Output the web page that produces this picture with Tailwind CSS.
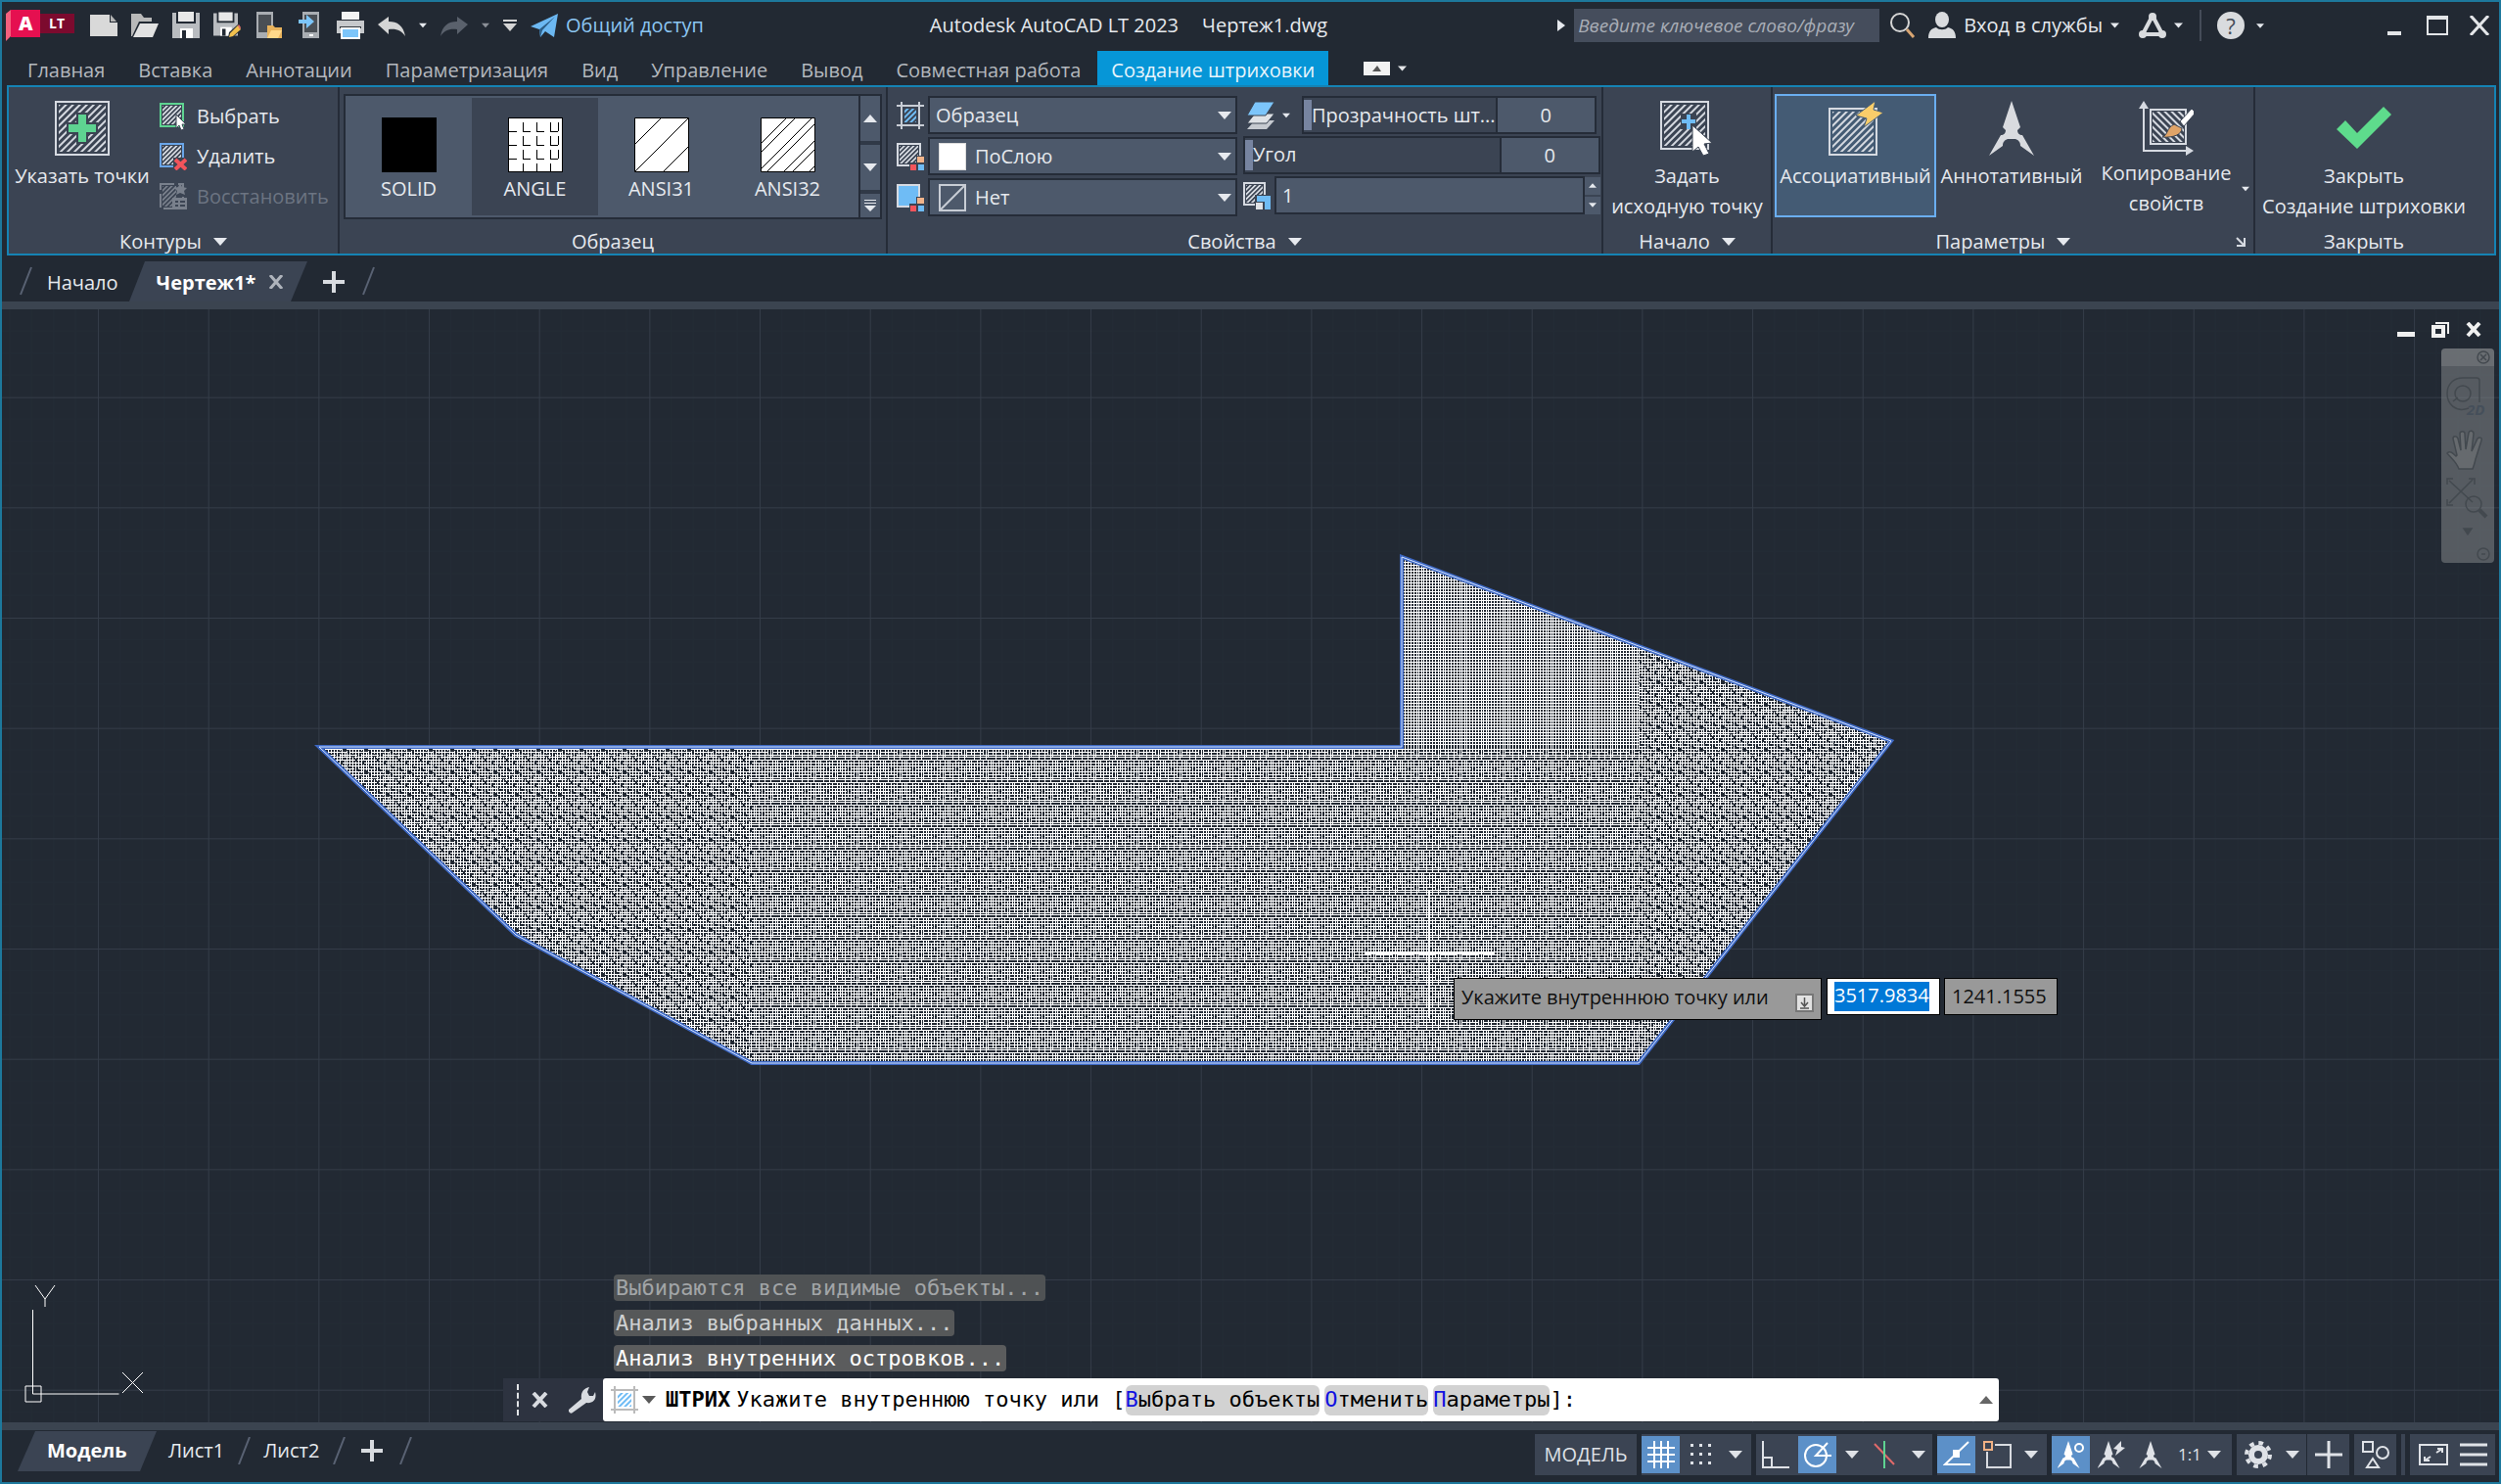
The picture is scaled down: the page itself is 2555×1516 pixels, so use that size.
<!DOCTYPE html>
<html lang="ru">
<head>
    <meta charset="utf-8">
    <title>Autodesk AutoCAD LT 2023 - Чертеж1.dwg</title>
    <script src="https://cdn.jsdelivr.net/npm/@tailwindcss/browser@4"></script>
</head>
<body class="bg-[#222933]">

<!-- Shared icon definitions -->
<svg class="absolute w-0 h-0" aria-hidden="true">
    <defs>
        <pattern id="diag" width="5" height="5" patternUnits="userSpaceOnUse" patternTransform="rotate(45)">
            <rect x="0" width="2" height="5" fill="#d6dae1" />
        </pattern>
        <pattern id="diag-small" width="3.4" height="3.4" patternUnits="userSpaceOnUse" patternTransform="rotate(45)">
            <rect x="0" width="1.7" height="3.4" fill="#d6dae1" />
        </pattern>
        <pattern id="diag-back" width="5" height="5" patternUnits="userSpaceOnUse" patternTransform="rotate(-45)">
            <rect x="0" width="2" height="5" fill="#d6dae1" />
        </pattern>
        <pattern id="diag-blue" width="4" height="4" patternUnits="userSpaceOnUse" patternTransform="rotate(45)">
            <rect x="0" width="2" height="4" fill="#6fbcf5" />
        </pattern>
        <symbol id="down" viewBox="0 0 14 8"><path d="M0 0h14L7 8z" fill="currentColor" /></symbol>
        <symbol id="up" viewBox="0 0 14 8"><path d="M0 8h14L7 0z" fill="currentColor" /></symbol>
        <symbol id="floppy" viewBox="0 0 28 28">
            <path d="M0 1h4v11h20V1h4v26H0z" fill="#b9bcc0" />
            <path d="M6 0h16v10H6z" fill="#e8e8e8" />
            <path d="M8 17h13v10H8z" fill="#fff" />
            <path d="M10 19h4v8h-4z" fill="#222933" />
        </symbol>
        <symbol id="anno" viewBox="0 0 48 56">
            <path d="M24 0l9 27-3 3c0 3 2 5 5 5l12 21-14-10c0-4-2-6-5-7h-8c-3 1-5 3-5 7L1 56l12-21c3 0 5-2 5-5l-3-3z" fill="currentColor" />
        </symbol>
    </defs>
</svg>

<div class="min-h-screen flex flex-col border-2 border-[#1d789c] font-['Open_Sans','Noto_Sans',sans-serif] text-[20px] leading-6 text-[#e6e9ee]">

    <!-- Title bar -->
    <header class="h-[48px] shrink-0 relative flex items-center justify-between pl-1 pr-[10px]">
        <div class="flex items-center gap-[14px]">
            <button class="flex items-start mr-[2px]" aria-label="Меню приложения">
                <svg class="w-[70px] h-8" viewBox="0 0 70 32">
                    <path d="M0 4L5 0v27L0 32z" fill="#f5607d" />
                    <path d="M5 0h30v28H5z" fill="#e51050" />
                    <path d="M35 4h35v20H35z" fill="#7c0a2e" />
                    <text x="13" y="21" font-size="20" font-weight="800" fill="#fff">A</text>
                    <text x="44" y="19" font-size="14" font-weight="700" fill="#fff">LT</text>
                </svg>
            </button>
            <button aria-label="Новый"><svg class="w-7 h-7" viewBox="0 0 28 28"><path d="M0 3h20v8h8v14H0z" fill="#d9d9d9" /><path d="M21 3l6 7h-6z" fill="#b5b5b5" /></svg></button>
            <button aria-label="Открыть"><svg class="w-7 h-7" viewBox="0 0 28 28"><path d="M0 2h10l3 4h8v4H8L1 25H0z" fill="#b9b9b9" /><path d="M9 12h19l-6 14H2z" fill="#e2e2e2" /></svg></button>
            <button aria-label="Сохранить"><svg class="w-7 h-7"><use href="#floppy" /></svg></button>
            <button aria-label="Сохранить как"><svg class="w-7 h-7" viewBox="0 0 28 28"><use href="#floppy" width="25" height="26" /><path d="M15 27l1-6 9-8 4 5-9 8z" fill="#222933" /><path d="M16 26l1-4 8-8 3 4-8 7z" fill="#f2c14e" /><path d="M25 14l1-1 2 3-1 2z" fill="#e86f6f" /></svg></button>
            <button aria-label="Открыть из веб"><svg class="w-7 h-7" viewBox="0 0 28 28"><path d="M2 0h17v27H2z" fill="#a9adb2" /><path d="M4 3h13v18H4z" fill="#4a4f55" /><path d="M13 14h6l2 2h7v11H13z" fill="#e9b35c" /><path d="M17 19h11l-4 8H13z" fill="#ffd88a" /></svg></button>
            <button aria-label="Сохранить в веб"><svg class="w-7 h-7" viewBox="0 0 28 28"><path d="M7 0h17v27H7z" fill="#a9adb2" /><path d="M9 3h13v18H9z" fill="#4a4f55" /><path d="M3 8h8V3l8 7-8 7v-5H3z" fill="#7cc5fa" /><path d="M14 23h4v2h-4z" fill="#fff" /></svg></button>
            <button aria-label="Печать"><svg class="w-7 h-7" viewBox="0 0 28 28"><path d="M5 0h18v8H5z" fill="#f4f4f4" /><path d="M0 9h28v13H0z" fill="#c7c9cc" /><path d="M3 15h22v2H3z" fill="#33393f" /><path d="M5 17h18v10H5z" fill="#7cc5fa" stroke="#fff" stroke-width="2" /></svg></button>
            <button aria-label="Отменить"><svg class="w-7 h-7" viewBox="0 0 28 28"><path d="M0 13l11-8v5c9 0 15 4 17 15-4-6-9-8-17-7v5z" fill="#d5d5d5" /></svg></button>
            <svg class="w-2 h-[6px]"><use href="#down" /></svg>
            <button class="text-[#5a616c]" aria-label="Повторить"><svg class="w-7 h-7" viewBox="0 0 28 28"><path d="M28 13L17 5v5C8 10 2 14 0 25c4-6 9-8 17-7v5z" fill="currentColor" /></svg></button>
            <svg class="w-2 h-[6px] text-[#8b9098]"><use href="#down" /></svg>
            <button aria-label="Настройка панели"><svg class="w-[14px] h-3" viewBox="0 0 14 12"><path d="M0 0h14v2H0zM0 4h14l-7 8z" fill="#d5d5d5" /></svg></button>
            <button class="flex items-center gap-2 text-[#8cc6f2]">
                <svg class="w-7 h-6" viewBox="0 0 28 24"><path d="M0 13L28 0l-4 24-9-6-5 6-1-8z" fill="#6cb8f2" /><path d="M9 16L25 3 12 17l-2 7z" fill="#2c5d86" /></svg>
                Общий доступ
            </button>
        </div>

        <h1 class="absolute left-[37%] flex gap-6 pl-1 whitespace-nowrap"><span>Autodesk AutoCAD LT 2023</span><span>Чертеж1.dwg</span></h1>

        <div class="flex items-center">
            <svg class="w-2 h-3 mr-[9px]" viewBox="0 0 8 12"><path d="M0 0l8 6-8 6z" fill="#e6e9ee" /></svg>
            <input type="search" aria-label="Поиск" placeholder="Введите ключевое слово/фразу" class="w-[312px] h-[34px] px-1 bg-[#454d5c] italic text-[19px] placeholder:text-[#a9aeb7]">
            <button class="ml-[10px]" aria-label="Найти"><svg class="w-7 h-7" viewBox="0 0 28 28" fill="none"><circle cx="11" cy="11" r="9" stroke="#d5d5d5" stroke-width="2" /><path d="M18 18l7 8" stroke="#d8a572" stroke-width="3" /></svg></button>
            <button class="flex items-center gap-2 ml-3">
                <svg class="w-7 h-7" viewBox="0 0 28 28" fill="#d9dbde"><ellipse cx="14" cy="8" rx="7" ry="8" /><path d="M0 27c0-7 3-10 8-11 3 3 9 3 12 0 5 1 8 4 8 11z" /></svg>
                Вход в службы
                <svg class="w-[9px] h-[6px]"><use href="#down" /></svg>
            </button>
            <button class="flex items-center gap-2 ml-[20px]" aria-label="Autodesk App Store">
                <svg class="w-7 h-7" viewBox="0 0 28 28" fill="none" stroke="#d9dbde" stroke-width="4"><path d="M14 4L4 23M14 4l10 19M4 23h20" /><circle cx="14" cy="5" r="2" /><circle cx="4" cy="23" r="2" /><circle cx="24" cy="23" r="2" /></svg>
                <svg class="w-[9px] h-[6px]"><use href="#down" /></svg>
            </button>
            <span class="w-[2px] h-8 ml-[17px] bg-[#454c58]"></span>
            <button class="flex items-center gap-3 ml-4" aria-label="Справка">
                <span class="w-7 h-7 rounded-full bg-[#d9dbde] text-[#454c58] text-[22px] leading-7">?</span>
                <svg class="w-2 h-[5px]"><use href="#down" /></svg>
            </button>
            <button class="ml-[126px]" aria-label="Свернуть"><svg class="w-[14px] h-5" viewBox="0 0 14 20"><path d="M0 16h14v4H0z" fill="#e3e5e8" /></svg></button>
            <button class="ml-[26px]" aria-label="Развернуть"><svg class="w-[22px] h-5" viewBox="0 0 22 20"><path d="M1 1h20v18H1z" fill="none" stroke="#e3e5e8" stroke-width="2" /><path d="M0 0h22v4H0z" fill="#e3e5e8" /></svg></button>
            <button class="ml-[22px]" aria-label="Закрыть"><svg class="w-5 h-5" viewBox="0 0 20 20"><path d="M1 0l18 20M19 0L1 20" stroke="#e3e5e8" stroke-width="3" /></svg></button>
        </div>
    </header>

    <!-- Ribbon tabs -->
    <nav class="h-[37px] shrink-0 flex items-stretch pl-[9px] pt-[2px] text-[#b4b8be]">
        <button class="px-[17px] pt-1">Главная</button>
        <button class="px-[17px] pt-1">Вставка</button>
        <button class="px-[17px] pt-1">Аннотации</button>
        <button class="px-[17px] pt-1">Параметризация</button>
        <button class="px-[17px] pt-1">Вид</button>
        <button class="px-[17px] pt-1">Управление</button>
        <button class="px-[17px] pt-1">Вывод</button>
        <button class="px-[17px] pt-1">Совместная работа</button>
        <button class="px-[14px] pt-1 bg-[#0696d7] text-[#e8f5fc]">Создание штриховки</button>
        <button class="flex items-center gap-2 ml-9" aria-label="Свернуть ленту">
            <svg class="w-[27px] h-[14px]" viewBox="0 0 27 14"><path d="M0 0h27v14H0z" fill="#f2f2f2" /><path d="M9 10h9l-4-6z" fill="#555" /></svg>
            <svg class="w-[9px] h-[6px] text-[#e3e5e8]"><use href="#down" /></svg>
        </button>
    </nav>

    <!-- Ribbon -->
    <section class="h-[174px] shrink-0 ml-[5px] mr-[3px] flex border-2 border-[#1583b4] bg-[#3b4453] whitespace-nowrap">

        <!-- Boundaries -->
        <div class="w-[338px] flex flex-col border-r-2 border-[#252c38]">
            <div class="h-[146px] flex pt-[14px] pl-[8px] gap-3">
                <button class="flex flex-col items-center w-[134px]">
                    <svg class="w-14 h-14" viewBox="0 0 56 56"><path d="M1 1h54v54H1z" fill="none" stroke="#d6dae1" stroke-width="2" /><path d="M4 4h48v48H4z" fill="url(#diag)" /><path d="M22 12h12v10h10v12H34v10H22V34H12V22h10z" fill="#3b4453" /><path d="M24 14h8v10h10v8H32v10h-8V32H14v-8h10z" fill="#5ed391" /></svg>
                    <span class="mt-[9px]">Указать точки</span>
                </button>
                <div class="flex flex-col gap-[13px] pt-[2px]">
                    <button class="flex items-center gap-[10px] h-7">
                        <svg class="w-7 h-7" viewBox="0 0 28 28"><path d="M1 1h23v23H1z" fill="none" stroke="#5ed391" stroke-width="2" /><path d="M3 3h19v19H3z" fill="url(#diag-small)" /><path d="M17 12v14l3-3 2 5 3-1-2-5h4z" fill="#fff" stroke="#3b4453" /></svg>
                        Выбрать
                    </button>
                    <button class="flex items-center gap-[10px] h-7">
                        <svg class="w-7 h-7" viewBox="0 0 28 28"><path d="M1 1h23v23H1z" fill="none" stroke="#6aa5e8" stroke-width="2" /><path d="M3 3h19v19H3z" fill="url(#diag-small)" /><path d="M14 15h14v13H14z" fill="#3b4453" /><path d="M16 17l11 10M27 17L16 27" stroke="#f2545b" stroke-width="4" /></svg>
                        Удалить
                    </button>
                    <button class="flex items-center gap-[10px] h-7 text-[#6c7482]" disabled>
                        <svg class="w-7 h-7" viewBox="0 0 28 28" opacity="0.4"><path d="M1 1h23v25H1z" fill="none" stroke="#d6dae1" stroke-width="2" stroke-dasharray="14 4" /><path d="M3 3h14v21H3z" fill="url(#diag-small)" /><path d="M21 0l2 4 5 1-3 3 1 4-5-2-4 2 1-4-3-3 4-1z" fill="#d6dae1" /><path d="M13 15h15v12H13z" fill="#d6dae1" /><path d="M16 19h3M21 19h5M16 23h3M21 23h5" stroke="#3b4453" stroke-width="2" /></svg>
                        Восстановить
                    </button>
                </div>
            </div>
            <h2 class="flex justify-center items-center gap-3">Контуры <svg class="w-[14px] h-2"><use href="#down" /></svg></h2>
        </div>

        <!-- Pattern gallery -->
        <div class="w-[560px] flex flex-col border-r-2 border-[#252c38]">
            <div class="h-[128px] mt-[7px] mb-[11px] mx-1 flex border-2 border-[#252c38] bg-[#4d596b]">
                <button class="w-[129px] flex flex-col items-center pt-[22px] gap-[5px]">
                    <svg class="w-14 h-14" viewBox="0 0 56 56"><path d="M0 0h56v56H0z" /></svg>SOLID
                </button>
                <button class="w-[129px] my-[2px] flex flex-col items-center pt-[20px] gap-[5px] bg-[#3b4453]">
                    <svg class="w-14 h-14" viewBox="0 0 56 56" stroke="#000" shape-rendering="crispEdges"><path d="M.5.5h55v55H.5z" fill="#fff" /><path d="M1 14.500h8M15 14.500h8M29 14.500h8M43 14.500h8M1 28.500h8M15 28.500h8M29 28.500h8M43 28.500h8M1 42.500h8M15 42.500h8M29 42.500h8M43 42.500h8M15.500 5v9M29.500 5v9M43.500 5v9M51.500 5v9M15.500 19v9M29.500 19v9M43.500 19v9M51.500 19v9M15.500 33v9M29.500 33v9M43.500 33v9M51.500 33v9M15.500 47v9M29.500 47v9M43.500 47v9" /></svg>ANGLE
                </button>
                <button class="w-[129px] flex flex-col items-center pt-[22px] gap-[5px]">
                    <svg class="w-14 h-14" viewBox="0 0 56 56" stroke="#000"><path d="M.5.5h55v55H.5z" fill="#fff" /><path d="M1 27L27 1M1 55L55 1M30 55l25-25" /></svg>ANSI31
                </button>
                <button class="w-[129px] flex flex-col items-center pt-[22px] gap-[5px]">
                    <svg class="w-14 h-14" viewBox="0 0 56 56" stroke="#000"><path d="M.5.5h55v55H.5z" fill="#fff" /><path d="M1 26L26 1M1 35L35 1M1 52L52 1M7 55L55 7M24 55l31-31M33 55l22-22M50 55l5-5" /></svg>ANSI32
                </button>
                <div class="flex-1 flex flex-col ml-[8px] border-l-2 border-[#252c38]">
                    <button class="h-[50px] flex justify-center items-center border-b-4 border-[#303947]" aria-label="Вверх"><svg class="w-[14px] h-2"><use href="#up" /></svg></button>
                    <button class="flex-1 flex justify-center items-center border-b-4 border-[#303947]" aria-label="Вниз"><svg class="w-[14px] h-2"><use href="#down" /></svg></button>
                    <button class="h-6 flex justify-center items-center" aria-label="Все образцы"><svg class="w-[12px] h-3" viewBox="0 0 12 12" fill="currentColor"><path d="M0 0h12v1H0zM0 3h12v1H0zM0 6h12l-6 6z" /></svg></button>
                </div>
            </div>
            <h2 class="text-center">Образец</h2>
        </div>

        <!-- Properties -->
        <div class="w-[731px] flex flex-col border-r-2 border-[#252c38]">
            <div class="h-[146px] pt-[9px] pl-[9px] flex gap-[6px]">
                <div class="flex flex-col gap-[3px]">
                    <label class="flex items-center gap-1 relative">
                        <svg class="w-7 h-7" viewBox="0 0 28 28"><path d="M5 0v28M23 0v28M0 4h28M0 24h28" stroke="#c8cdd5" stroke-width="2" /><path d="M8 7h12v14H8z" fill="url(#diag-blue)" /></svg>
                        <select aria-label="Тип штриховки" class="appearance-none w-[316px] h-[39px] px-[6px] border-2 border-[#252c38] bg-[#4d596b]"><option>Образец</option></select>
                        <svg class="absolute right-[6px] w-[14px] h-2"><use href="#down" /></svg>
                    </label>
                    <label class="flex items-center gap-1 relative">
                        <svg class="w-7 h-7" viewBox="0 0 28 28"><path d="M1 1h23v22H1z" fill="none" stroke="#d6dae1" stroke-width="2" /><path d="M3 3h19v18H3z" fill="url(#diag-small)" /><path d="M13 20h7v-7h8v15H13z" fill="#3b4453" /><path d="M21 14h7v6h-7z" fill="#f2b48a" /><path d="M14 22h6v6h-6z" fill="#f2545b" /><path d="M22 22h6v6h-6z" fill="#6fbcf5" /></svg>
                        <select aria-label="Цвет штриховки" class="appearance-none w-[316px] h-[39px] pl-[46px] border-2 border-[#252c38] bg-[#4d596b]"><option>ПоСлою</option></select>
                        <span class="absolute left-[43px] w-7 h-7 bg-white border border-[#ddd]"></span>
                        <svg class="absolute right-[6px] w-[14px] h-2"><use href="#down" /></svg>
                    </label>
                    <label class="flex items-center gap-1 relative">
                        <svg class="w-7 h-7" viewBox="0 0 28 28"><path d="M1 1h22v22H1z" fill="#6fbcf5" stroke="#d6dae1" stroke-width="2" /><path d="M13 20h7v-7h8v15H13z" fill="#3b4453" /><path d="M21 14h7v6h-7z" fill="#f2b48a" /><path d="M14 22h6v6h-6z" fill="#f2545b" /><path d="M22 22h6v6h-6z" fill="#6fbcf5" /></svg>
                        <select aria-label="Цвет фона" class="appearance-none w-[316px] h-[39px] pl-[46px] border-2 border-[#252c38] bg-[#4d596b]"><option>Нет</option></select>
                        <svg class="absolute left-[43px] w-7 h-7" viewBox="0 0 28 28"><path d="M1 1h26v26H1zM1 27L27 1" fill="none" stroke="#c8cdd5" stroke-width="2" /></svg>
                        <svg class="absolute right-[6px] w-[14px] h-2"><use href="#down" /></svg>
                    </label>
                </div>
                <div class="w-[365px] flex flex-col gap-[2px] mr-1">
                    <div class="flex items-center">
                        <button class="flex items-center gap-2 px-1" aria-label="Слой штриховки"><svg class="w-7 h-7" viewBox="0 0 28 28"><path d="M8 19h20l-8 9H0z" fill="#c6cad0" /><path d="M8 12h20l-8 10H0z" fill="#dfe2e6" stroke="#3b4453" /><path d="M8 0h20L19 14H0z" fill="#7cc5fa" stroke="#3b4453" /></svg><svg class="w-2 h-[6px]"><use href="#down" /></svg></button>
                        <div class="relative flex flex-1 h-[39px] ml-2 mr-1 border-2 border-[#252c38]">
                            <input type="range" value="0" aria-label="Прозрачность штриховки" class="absolute left-0 w-[196px] h-full appearance-none [&::-webkit-slider-thumb]:appearance-none [&::-webkit-slider-thumb]:w-2 [&::-webkit-slider-thumb]:h-[31px] [&::-webkit-slider-thumb]:bg-[#7784a0]">
                            <label for="transparency" class="relative flex-1 pl-2 pt-[6px]">Прозрачность шт...</label>
                            <input id="transparency" value="0" class="relative w-[101px] text-center border-l-2 border-[#252c38] bg-[#4d596b]">
                        </div>
                    </div>
                    <div class="relative flex h-[39px] border-2 border-[#252c38]">
                        <input type="range" value="0" aria-label="Угол штриховки" class="absolute left-0 w-[256px] h-full appearance-none [&::-webkit-slider-thumb]:appearance-none [&::-webkit-slider-thumb]:w-2 [&::-webkit-slider-thumb]:h-[31px] [&::-webkit-slider-thumb]:bg-[#7784a0]">
                        <label for="angle" class="relative flex-1 pl-2 pt-[5px]">Угол</label>
                        <input id="angle" value="0" class="relative w-[101px] text-center border-l-2 border-[#252c38] bg-[#4d596b]">
                    </div>
                    <label class="flex items-center gap-1">
                        <svg class="w-7 h-7" viewBox="0 0 28 28"><path d="M1 1h21v22H1z" fill="none" stroke="#d6dae1" stroke-width="2" /><path d="M3 3h17v18H3z" fill="url(#diag-small)" /><path d="M12 13h16v15H12z" fill="#3b4453" /><path d="M14 14h14v14h-6v-8h-8z" fill="#6fbcf5" /><path d="M13 21h7v7h-7z" fill="#dfe2e6" /></svg>
                        <input value="1" aria-label="Масштаб образца" class="flex-1 h-[39px] px-[6px] border-2 border-[#252c38] bg-[#4d596b]">
                        <span class="flex flex-col gap-[2px] -ml-1">
                            <button class="w-4 h-[18px] flex justify-center items-center bg-[#4d596b]" aria-label="Больше"><svg class="w-2 h-[7px]"><use href="#up" /></svg></button>
                            <button class="w-4 h-[18px] flex justify-center items-center bg-[#4d596b]" aria-label="Меньше"><svg class="w-2 h-[7px]"><use href="#down" /></svg></button>
                        </span>
                    </label>
                </div>
            </div>
            <h2 class="flex justify-center items-center gap-3">Свойства <svg class="w-[14px] h-2"><use href="#down" /></svg></h2>
        </div>

        <!-- Origin -->
        <div class="w-[173px] flex flex-col border-r-2 border-[#252c38]">
            <button class="h-[146px] flex flex-col items-center pt-[14px]">
                <svg class="w-14 h-14" viewBox="0 0 56 56"><path d="M1 1h48v48H1z" fill="none" stroke="#d6dae1" stroke-width="2" /><path d="M4 4h42v42H4z" fill="url(#diag)" /><path d="M21 13h16v16H21z" fill="#3b4453" /><path d="M27 14h4v5h5v4h-5v6h-4v-6h-5v-4h5z" fill="#6fbcf5" /><path d="M33 25v27l6-5 5 9 6-2-5-10 8-1z" fill="#fff" stroke="#3b4453" /></svg>
                <span class="mt-[5px] leading-[31px]">Задать<br>исходную точку</span>
            </button>
            <h2 class="flex justify-center items-center gap-3">Начало <svg class="w-[14px] h-2"><use href="#down" /></svg></h2>
        </div>

        <!-- Options -->
        <div class="w-[493px] flex flex-col border-r-2 border-[#252c38]">
            <div class="h-[146px] flex pt-[7px] pl-[2px]">
                <button class="w-[165px] h-[126px] flex flex-col items-center pt-[5px] border-2 border-[#6aaef0] bg-[#445b74]">
                    <svg class="w-14 h-14" viewBox="0 0 56 56"><path d="M1 8h48v47H1z" fill="none" stroke="#d6dae1" stroke-width="2" /><path d="M4 11h42v41H4z" fill="url(#diag)" /><path d="M48 0L28 15l11 3-3 9 20-15-10-3z" fill="#f9cd6a" stroke="#445b74" /></svg>
                    <span class="mt-[9px]">Ассоциативный</span>
                </button>
                <button class="w-[154px] flex flex-col items-center pt-[7px]">
                    <svg class="w-12 h-14 text-[#d9dbdf]"><use href="#anno" /></svg>
                    <span class="mt-[9px]">Аннотативный</span>
                </button>
                <button class="w-[154px] flex flex-col items-center pt-[7px] ml-1">
                    <svg class="w-14 h-14" viewBox="0 0 56 56"><path d="M5 4v47h47" fill="none" stroke="#d6dae1" stroke-width="2" /><path d="M0 8h10L5 0zM48 46v10l8-5z" fill="#d6dae1" /><path d="M12 9h36v35H12z" fill="none" stroke="#d6dae1" stroke-width="2" /><path d="M14 11h32v31H14z" fill="url(#diag-back)" /><path d="M42 21L54 8l4 4-12 14z" fill="#fff" stroke="#3b4453" /><path d="M24 37c6-2 4-9 12-13l8 4c0 6-8 10-20 9z" fill="#e0a468" stroke="#3b4453" /></svg>
                    <span class="mt-[2px] leading-[31px]">Копирование<br>свойств</span>
                </button>
                <svg class="w-2 h-[6px] mt-[94px]"><use href="#down" /></svg>
            </div>
            <h2 class="relative flex justify-center items-center gap-3 pr-5">Параметры <svg class="w-[14px] h-2"><use href="#down" /></svg>
                <svg class="absolute right-2 w-[10px] h-[10px]" viewBox="0 0 10 10"><path d="M1 1l7 7M9 1v8H1" fill="none" stroke="#d6dae1" stroke-width="2" /></svg>
            </h2>
        </div>

        <!-- Close -->
        <div class="flex-1 flex flex-col pr-[22px]">
            <button class="h-[146px] flex flex-col items-center pt-[14px]">
                <svg class="w-14 h-14" viewBox="0 0 56 56"><path d="M0 29l9-9 12 13L48 6l8 8-35 35z" fill="#5edb8c" /></svg>
                <span class="mt-[5px] leading-[31px]">Закрыть<br>Создание штриховки</span>
            </button>
            <h2 class="text-center">Закрыть</h2>
        </div>
    </section>

    <!-- Document tabs -->
    <nav class="h-[47px] shrink-0 flex items-end pl-4">
        <svg class="w-4 h-[30px] mb-[6px]" viewBox="0 0 16 30"><path d="M14 1L3 29" stroke="#596273" stroke-width="2" /></svg>
        <button class="h-9 px-[14px] pb-[2px]">Начало</button>
        <div class="relative flex items-center h-[41px] w-[182px] -ml-[3px]">
            <svg class="absolute w-full h-full" viewBox="0 0 182 41" preserveAspectRatio="none"><path d="M16 0h166l-17 41H0z" fill="#3b4453" /></svg>
            <button class="relative ml-[28px] pt-[2px] font-bold text-white">Чертеж1*</button>
            <button class="relative ml-[14px]" aria-label="Закрыть вкладку"><svg class="w-[14px] h-[14px]" viewBox="0 0 14 14"><path d="M1 0l12 14M13 0L1 14" stroke="#aeb3bb" stroke-width="3" /></svg></button>
        </div>
        <button class="ml-4 mb-[9px]" aria-label="Новая вкладка"><svg class="w-[22px] h-[22px]" viewBox="0 0 22 22"><path d="M11 0v22M0 11h22" stroke="#d8dbe0" stroke-width="4" /></svg></button>
        <svg class="w-4 h-[30px] mb-[6px] ml-[16px]" viewBox="0 0 16 30"><path d="M14 1L3 29" stroke="#596273" stroke-width="2" /></svg>
    </nav>

    <!-- Drawing area -->
    <main class="relative flex-1 border-y-8 border-[#3b4450]">
        <svg class="absolute inset-0 w-full h-full" aria-label="Чертеж">
            <defs>
                <pattern id="grid" x="98" y="-23" width="112.67" height="112.67" patternUnits="userSpaceOnUse">
                    <path d="M22.500 0v113M45 0v113M67.500 0v113M90 0v113M0 22.500h113M0 45h113M0 67.500h113M0 90h113" stroke="#232b35" />
                    <path d="M.5 0v113M0 .5h113" stroke="#343c48" />
                </pattern>
                <pattern id="mesh" width="22" height="21" patternUnits="userSpaceOnUse">
                    <path d="M.5 0v21M3.500 0v21M6.500 0v21M9.500 0v21M12.500 0v21M15.500 0v21M17.500 0v21M20.500 0v21M0 .5h22M0 3.500h22M0 6.500h22M0 9.500h22M0 12.500h22M0 15.500h22M0 18.500h22" stroke="#fff" />
                </pattern>
                <pattern id="mesh-body" width="22" height="23" patternUnits="userSpaceOnUse">
                    <path d="M.5 0v18M3.500 4v19M6.500 0v15M9.500 2v21M12.500 0v19M15.500 6v17M17.500 0v20M20.500 0v12" stroke="#fff" />
                    <path d="M0 .5h22M0 3.500h22M0 6.500h22M0 9.500h5M9 9.500h13M0 12.500h22M0 15.500h13M17 15.500h5M0 18.500h22M0 20.500h22" stroke="#fff" />
                </pattern>
                <pattern id="mesh-side" width="22" height="23" patternUnits="userSpaceOnUse">
                    <path d="M.5 0v12M.5 14v9M3.500 0v6M3.500 9v14M6.500 0v17M6.500 20v3M9.500 2v20M12.500 0v9M12.500 12v11M15.500 0v14M15.500 17v6M17.500 5v18M20.500 0v11M20.500 15v5" stroke="#fff" />
                    <path d="M0 .5h9M11 .5h11M0 3.500h15M18 3.500h4M2 6.500h20M0 9.500h8M12 9.500h10M0 12.500h18M3 15.500h19M0 18.500h11M15 18.500h7M0 20.500h5M8 20.500h14" stroke="#fff" />
                </pattern>
                <clipPath id="hull"><path d="M324 447H1430V253L1930 441 1672 770H766L525 639z" /></clipPath>
            </defs>
            <rect width="100%" height="100%" fill="url(#grid)" shape-rendering="crispEdges" />
            <g clip-path="url(#hull)" shape-rendering="crispEdges">
                <path d="M766 447h906v324H766z" fill="url(#mesh-body)" />
                <path d="M1430 250h242v197h-242z" fill="url(#mesh)" />
                <path d="M320 447h446v324H320zM1672 250h260v522h-260z" fill="url(#mesh-side)" />
            </g>
            <path d="M324 447H1430V253L1930 441 1672 770H766L525 639z" fill="none" stroke="#3d68c4" stroke-width="4" />
            <path d="M324 447H1430V253L1930 441 1672 770H766L525 639z" fill="none" stroke="#d5e4ff" stroke-width="1" />
            <!-- Crosshair -->
            <path d="M1393 658h131M1458 594v130" stroke="#fff" stroke-width="2" shape-rendering="crispEdges" />
            <!-- UCS axes -->
            <path d="M31.500 1022v86h88M24 1100h16v16H24zM34 997l10 14 10-14M44 1011v8M123 1086l21 21M144 1086l-21 21" fill="none" stroke="#fff" />
        </svg>

        <!-- Dynamic input -->
        <div class="absolute left-[1483px] top-[683px] flex items-start gap-1 text-[#0f0f0f]">
            <div class="h-[43px] w-[376px] flex items-center justify-between pl-[7px] pr-[7px] pb-1 border border-black bg-[#999]">
                Укажите внутреннюю точку или
                <svg class="w-[19px] h-[19px] mt-3" viewBox="0 0 19 19"><path d="M1 1h17v17H1z" fill="#e2e2e2" stroke="#777" stroke-width="2" /><path d="M9.500 4v8M6 9l3.500 4L13 9M5 15h9" fill="none" stroke="#555" stroke-width="1.500" /></svg>
            </div>
            <div class="h-[38px] w-[116px] ml-[1px] flex items-center px-[7px] border border-black bg-white"><span class="bg-[#0078d7] text-white h-[30px] leading-7">3517.9834</span></div>
            <div class="h-[38px] w-[116px] flex items-center px-[7px] border border-black bg-[#999]">1241.1555</div>
        </div>

        <!-- Viewport window controls -->
        <div class="absolute top-[13px] right-[18px] flex items-center gap-[17px]">
            <button aria-label="Свернуть чертеж"><svg class="w-[18px] h-4" viewBox="0 0 18 16"><path d="M0 10h18v5H0z" fill="#f0f0f0" /></svg></button>
            <button aria-label="Восстановить чертеж"><svg class="w-[18px] h-4" viewBox="0 0 18 16" fill="none" stroke="#f0f0f0"><path d="M4 1h13v11" stroke-width="2" /><path d="M2 5h10v9H2z" stroke-width="4" /></svg></button>
            <button aria-label="Закрыть чертеж"><svg class="w-4 h-4" viewBox="0 0 16 16"><path d="M2 1l12 13M14 1L2 14" stroke="#f0f0f0" stroke-width="4" /></svg></button>
        </div>

        <!-- Navigation bar -->
        <div class="absolute top-[40px] right-[5px] w-[54px] h-[219px] rounded bg-[#8a8d8f]/50 overflow-hidden">
            <svg class="w-full h-full" viewBox="0 0 54 219" fill="none" stroke="#43494f" stroke-width="1.500">
                <path d="M0 0h54v18H0z" fill="#8b8f92" fill-opacity=".35" stroke="none" />
                <circle cx="43" cy="9" r="6" /><path d="M40 6l6 6M46 6l-6 6" />
                <circle cx="22" cy="46" r="8" /><path d="M28 61C14 66 6 56 6 46c0-10 7-16 16-16h14c2 0 3 1 3 3v22M12 54l5-4" />
                <text x="26" y="68" font-size="15" font-weight="700" font-style="italic" fill="#454f5a" stroke="none">2D</text>
                <path d="M18 123c-3-8-8-11-12-16 3-3 6 0 9 3l1-1-4-17c0-3 4-3 5 0l3 12-1-17c0-3 5-3 5 0l1 16 3-17c1-3 5-2 5 1l-2 18 6-13c2-2 5-1 4 2l-6 19c-1 5-2 7-3 10z" fill="#666a6e" />
                <path d="M8 135l24 22M8 158l24-24M6 139v-6h6M28 133h6v6M6 154v6h6" />
                <circle cx="33" cy="159" r="8" /><path d="M39 165l7 7" stroke-width="4" />
                <path d="M23 184h8l-4 6z" fill="#43494f" />
                <circle cx="43" cy="210" r="6" /><path d="M41 210h4" />
            </svg>
        </div>

        <!-- Command history and prompt -->
        <div class="absolute left-[512px] bottom-[1px] right-[511px] font-['DejaVu_Sans_Mono',monospace] text-[22px]">
            <div class="flex flex-col items-start gap-[9px] pl-[113px] mb-[7px] leading-[27px]">
                <p class="px-[2px] rounded bg-[#4f5254] text-[#a2a5a7]">Выбираются все видимые объекты...</p>
                <p class="px-[2px] rounded bg-[#565859] text-[#cfd1d2]">Анализ выбранных данных...</p>
                <p class="px-[2px] rounded bg-[#5b5c5d] text-white">Анализ внутренних островков...</p>
            </div>
            <div class="h-[44px] flex bg-[#2d3340]">
                <div class="w-[102px] flex items-center pl-[14px] gap-[13px]">
                    <span class="h-8 border-l-2 border-dashed border-[#e3e5e8]"></span>
                    <button aria-label="Закрыть командную строку"><svg class="w-[17px] h-4" viewBox="0 0 17 16"><path d="M2 1l13 14M15 1L2 15" stroke="#d8dbe0" stroke-width="4" /></svg></button>
                    <button class="ml-2" aria-label="Настройка"><svg class="w-7 h-7" viewBox="0 0 28 28"><path d="M0 24L13 13c-1-6 2-11 8-12l-2 5 2 4h4l2-4c2 7-2 12-9 11L4 27c-2 2-5-1-4-3z" fill="#d8dbe0" /></svg></button>
                </div>
                <div class="flex-1 flex items-center rounded-[3px] bg-white text-black pl-2 pr-[6px] whitespace-nowrap">
                    <svg class="w-7 h-7" viewBox="0 0 28 28"><path d="M4 0v28M24 0v28M0 4h28M0 24h28" stroke="#bbb" stroke-width="2" /><path d="M7 7h14v14H7z" fill="url(#diag-blue)" /></svg>
                    <svg class="w-[14px] h-2 ml-1 text-[#5a5a5a]"><use href="#down" /></svg>
                    <label for="command" class="ml-[10px]"><b>ШТРИХ</b></label>
                    <span class="ml-[6px]">Укажите внутреннюю точку или [</span>
                    <button class="h-[31px] rounded-md bg-[#d2d2d2]"><span class="text-[#1212e0]">В</span>ыбрать объекты</button>
                    <button class="h-[31px] rounded-md bg-[#d2d2d2] ml-[5px]"><span class="text-[#1212e0]">О</span>тменить</button>
                    <button class="h-[31px] rounded-md bg-[#d2d2d2] ml-[5px]"><span class="text-[#1212e0]">П</span>араметры</button>
                    <span>]:</span>
                    <input id="command" class="flex-1 min-w-0 outline-none">
                    <svg class="w-[14px] h-2 text-[#666]"><use href="#up" /></svg>
                </div>
            </div>
        </div>
    </main>

    <!-- Layout tabs and status bar -->
    <footer class="h-[53px] shrink-0 flex justify-between items-start pl-4 pr-1">
        <nav class="flex items-center h-[42px]">
            <div class="relative w-[142px] h-[41px] flex items-center">
                <svg class="absolute w-full h-full" viewBox="0 0 142 41" preserveAspectRatio="none"><path d="M18 0h124l-17 41H0z" fill="#3b4453" /></svg>
                <button class="relative ml-[30px] font-bold text-white">Модель</button>
            </div>
            <button class="ml-3">Лист1</button>
            <svg class="w-4 h-7 ml-3" viewBox="0 0 16 28"><path d="M14 0L3 28" stroke="#596273" stroke-width="2" /></svg>
            <button class="ml-3">Лист2</button>
            <svg class="w-4 h-7 ml-3" viewBox="0 0 16 28"><path d="M14 0L3 28" stroke="#596273" stroke-width="2" /></svg>
            <button class="ml-[15px]" aria-label="Новый лист"><svg class="w-[22px] h-[22px]" viewBox="0 0 22 22"><path d="M11 0v22M0 11h22" stroke="#d8dbe0" stroke-width="4" /></svg></button>
            <svg class="w-4 h-7 ml-[15px]" viewBox="0 0 16 28"><path d="M14 0L3 28" stroke="#596273" stroke-width="2" /></svg>
        </nav>

        <div class="flex gap-[5px] mt-[4px] h-[42px] text-[#dfe2e7]">
            <button class="w-[104px] bg-[#3b4453]">МОДЕЛЬ</button>
            <div class="w-[112px] flex items-center bg-[#3b4453]">
                <button class="w-[39px] h-[38px] flex justify-center items-center bg-[#5c90c8]" aria-label="Сетка"><svg class="w-7 h-7" viewBox="0 0 28 28"><path d="M7 0v28M14 0v28M21 0v28M0 7h28M0 14h28M0 21h28" stroke="#fff" stroke-width="2" /></svg></button>
                <button class="ml-[10px]" aria-label="Шаговая привязка"><svg class="w-6 h-6" viewBox="0 0 24 24" fill="currentColor"><path d="M1 1h3v3H1zM10 1h3v3h-3zM19 1h3v3h-3zM1 10h3v3H1zM10 10h3v3h-3zM19 10h3v3h-3zM1 19h3v3H1zM10 19h3v3h-3zM19 19h3v3h-3z" /></svg></button>
                <svg class="w-[14px] h-2 ml-4"><use href="#down" /></svg>
            </div>
            <div class="w-[180px] flex items-center bg-[#3b4453] pl-[6px]">
                <button aria-label="Ортогональный режим"><svg class="w-7 h-7" viewBox="0 0 28 28" fill="none" stroke="currentColor" stroke-width="2"><path d="M1 0v27h27M1 17h9v10" /></svg></button>
                <button class="w-[39px] h-[38px] ml-[9px] flex justify-center items-center bg-[#5c90c8]" aria-label="Полярное отслеживание"><svg class="w-7 h-7" viewBox="0 0 28 28" fill="none" stroke="#fff" stroke-width="2"><circle cx="12" cy="15" r="11" /><path d="M28 15H12L24 2" /></svg></button>
                <svg class="w-[14px] h-2 ml-[9px]"><use href="#down" /></svg>
                <button class="ml-3" aria-label="Изометрия"><svg class="w-7 h-7" viewBox="0 0 28 28" fill="none" stroke-width="2"><path d="M4 3l20 21" stroke="#e06a6a" /><path d="M14 0v28" stroke="#5ed391" /></svg></button>
                <svg class="w-[14px] h-2 ml-[14px]"><use href="#down" /></svg>
            </div>
            <div class="w-[112px] flex items-center bg-[#3b4453]">
                <button class="w-[39px] h-[38px] flex justify-center items-center bg-[#5c90c8]" aria-label="Отслеживание привязки"><svg class="w-7 h-7" viewBox="0 0 28 28" fill="none" stroke="#fff" stroke-width="2"><path d="M26 1L2 24h26" /><path d="M11 10h5v6h-5z" fill="#fff" /></svg></button>
                <button class="ml-2" aria-label="Объектная привязка"><svg class="w-[30px] h-7" viewBox="0 0 30 28" fill="none" stroke-width="2"><path d="M12 4h16v23H4V11" stroke="#d8dbe0" /><path d="M1 1h8v8H1z" stroke="#f0b184" /></svg></button>
                <svg class="w-[14px] h-2 ml-3"><use href="#down" /></svg>
            </div>
            <div class="w-[184px] flex items-center bg-[#3b4453]">
                <button class="w-[39px] h-[38px] flex justify-center items-center bg-[#5c90c8] text-white" aria-label="Видимость аннотаций"><svg class="w-7 h-7" viewBox="0 0 28 28"><use href="#anno" x="-2" width="26" height="28" /><circle cx="22" cy="7" r="4" fill="none" stroke="#fff" stroke-width="2" /></svg></button>
                <button class="ml-[8px]" aria-label="Автомасштаб"><svg class="w-7 h-7" viewBox="0 0 28 28"><use href="#anno" x="-2" width="26" height="28" /><path d="M24 0l-8 8 4 1-2 6 10-8-4-1z" fill="currentColor" /></svg></button>
                <button class="ml-[14px]" aria-label="Масштаб аннотаций"><svg class="w-6 h-7"><use href="#anno" /></svg></button>
                <button class="ml-4 flex items-center gap-[6px] text-[17px]">1:1 <svg class="w-[14px] h-2"><use href="#down" /></svg></button>
            </div>
            <div class="w-[71px] flex items-center justify-center gap-[14px] bg-[#3b4453]">
                <button aria-label="Рабочее пространство"><svg class="w-7 h-7" viewBox="0 0 28 28" fill="none"><circle cx="14" cy="14" r="12" stroke="currentColor" stroke-width="4" stroke-dasharray="4.700 4.720" /><circle cx="14" cy="14" r="7" stroke="currentColor" stroke-width="6" /></svg></button>
                <svg class="w-[14px] h-2"><use href="#down" /></svg>
            </div>
            <button class="w-[43px] flex items-center justify-center bg-[#3b4453] -ml-[4px]" aria-label="Монитор аннотаций"><svg class="w-7 h-7" viewBox="0 0 28 28"><path d="M14 0v28M0 14h28" stroke="currentColor" stroke-width="3" /></svg></button>
            <button class="w-[43px] flex items-center justify-center bg-[#3b4453]" aria-label="Изоляция объектов"><svg class="w-7 h-7" viewBox="0 0 28 28" fill="none" stroke="currentColor" stroke-width="2"><path d="M1 1h10v10H1zM11 18l6 9H5z" /><circle cx="21" cy="12" r="6" /></svg></button>
            <span class="w-1 bg-[#3b4453]"></span>
            <div class="w-[87px] flex items-center justify-center gap-3 bg-[#3b4453]">
                <button aria-label="Очистить экран"><svg class="w-[30px] h-[22px]" viewBox="0 0 30 22" fill="none" stroke="currentColor" stroke-width="2"><path d="M1 1h28v20H1zM18 9l6-4M24 9V5h-5M12 13l-6 4M6 13v4h5" /></svg></button>
                <button aria-label="Адаптация"><svg class="w-7 h-6" viewBox="0 0 28 24"><path d="M0 2h28M0 12h28M0 22h28" stroke="currentColor" stroke-width="3" /></svg></button>
            </div>
        </div>
    </footer>
</div>
</body>
</html>
